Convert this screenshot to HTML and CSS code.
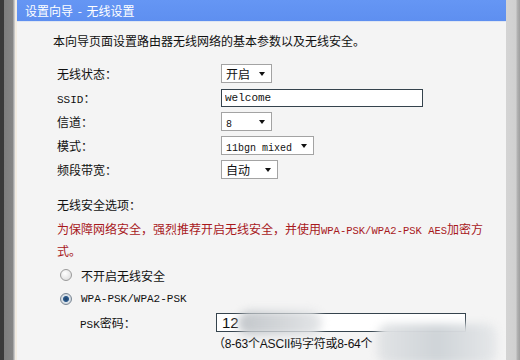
FILE: index.html
```html
<!DOCTYPE html>
<html lang="zh-CN">
  <head>
    <meta charset="UTF-8" />
    <title>设置向导 - 无线设置</title>
    <link rel="stylesheet" href="styles.css">
  </head>
  <body>
    <div class="edge"></div>
    <div class="window">
      <div class="title">设置向导 - 无线设置</div>
      <main class="content">
        <p class="intro">本向导页面设置路由器无线网络的基本参数以及无线安全。</p>
        <div class="form">
          <span class="label">无线状态：</span>
          <span class="select w-50"><select><option>开启</option></select></span>
          <span class="label"><span class="en">SSID</span>：</span>
          <span><input class="text ssid" type="text" value="welcome" /></span>
          <span class="label">信道：</span>
          <span class="select w-50"><select class="en"><option>8</option></select></span>
          <span class="label">模式：</span>
          <span class="select w-92"><select class="en"><option>11bgn mixed</option></select></span>
          <span class="label">频段带宽：</span>
          <span class="select w-56"><select><option>自动</option></select></span>
        </div>
        <p class="section">无线安全选项：</p>
        <p class="warn">为保障网络安全，强烈推荐开启无线安全，并使用<span class="en">WPA-PSK/WPA2-PSK AES</span>加密方<br />式。</p>
        <label class="radio"><input type="radio" name="sec" /> 不开启无线安全</label>
        <label class="radio"><input type="radio" name="sec" checked /> <span class="en">WPA-PSK/WPA2-PSK</span></label>
        <div class="psk">
          <span class="psk-label"><span class="en">PSK</span>密码：</span>
          <input class="text key" type="text" value="12" />
        </div>
        <p class="hint">（8-63个ASCII码字符或8-64个</p>
        <div class="blur blur-key"></div>
        <div class="blur blur-hint"></div>
      </main>
    </div>
    <div class="scroll"></div>
  </body>
</html>
```

FILE: styles.css
```css
body {
  margin: 0;
  height: 360px;
  display: flex;
  overflow: hidden;
  font-family: "Noto Sans CJK SC", sans-serif;
  font-size: 12px;
  color: #111;
  background: #f4f4f4;
}

.edge {
  width: 15px;
  background: linear-gradient(to right, #3a3a3a 0, #3a3a3a 4px, #7d7d7d 4px, #858585 13px, #c8c8c8 14px);
}

.window {
  flex: 1;
  border-left: 2px solid #f2ece2;
  display: flex;
  flex-direction: column;
}

.title {
  height: 22px;
  line-height: 21px;
  padding-left: 8px;
  color: #fff;
  font-size: 12px;
  word-spacing: 2px;
  background: linear-gradient(#6596f4, #5e8ff0);
  border-bottom: 1px solid #dfe6f2;
  box-sizing: border-box;
}

.content {
  position: relative;
  flex: 1;
  padding-left: 36px;
}

.en {
  font-family: "Liberation Mono", monospace;
  font-size: 11px;
}

p {
  margin: 0;
  line-height: 20px;
}

.intro {
  margin-top: 9px;
}

.form {
  display: grid;
  grid-template-columns: 164px auto;
  grid-auto-rows: 24px;
  align-items: center;
  margin: 10px 0 0 4px;
}

.select {
  position: relative;
  display: inline-block;
  height: 19px;
  border: 1px solid #a3a3a3;
  background: #fff;
  box-sizing: border-box;
}

.select select {
  appearance: none;
  border: 0;
  background: transparent;
  padding: 0 0 0 4px;
  height: 17px;
  width: 100%;
  font-family: "Noto Sans CJK SC", sans-serif;
  font-size: 12px;
  color: #111;
  outline: none;
}

.select select.en {
  font-family: "Liberation Mono", monospace;
  font-size: 10px;
}

.select::after {
  content: "";
  position: absolute;
  right: 6px;
  top: 7px;
  border-left: 3.5px solid transparent;
  border-right: 3.5px solid transparent;
  border-top: 4px solid #111;
}

.w-50 { width: 51px; }
.w-56 { width: 57px; }
.w-92 { width: 93px; }

.text {
  box-sizing: border-box;
  height: 18px;
  border: 1px solid #35434d;
  background: #fff;
  padding: 0 3px;
  outline: none;
}

.ssid {
  width: 202px;
  font-family: "Liberation Mono", monospace;
  font-size: 11px;
  color: #111;
}

.section {
  margin: 14px 0 0 4px;
}

.warn {
  margin: 4px 0 0 4px;
  color: #a8181c;
}

.warn .en {
  font-size: 10.5px;
}

.radio {
  display: flex;
  align-items: center;
  height: 24px;
  margin-left: 7px;
  gap: 9px;
}

.radio:first-of-type {
  margin-top: 2px;
}

.radio input {
  appearance: none;
  margin: 0;
  width: 12px;
  height: 12px;
  border-radius: 50%;
  border: 1px solid #9a9a9a;
  background: radial-gradient(circle at 40% 35%, #fff, #d6d6d6);
  box-sizing: border-box;
}

.radio input:checked {
  background: radial-gradient(circle, #1f3f66 0, #2b5a8c 2.5px, #dbe3ea 3.5px, #c9cfd6 6px);
  border-color: #7b8794;
}

.psk {
  display: flex;
  align-items: center;
  height: 22px;
  padding-left: 27px;
}

.psk-label {
  width: 136px;
}

.key {
  width: 250px;
  height: 19px;
  padding-left: 5px;
  font-family: "Liberation Sans", sans-serif;
  font-size: 15px;
  color: #111;
}

.hint {
  margin-left: 160px;
  line-height: 22px;
  font-family: "Liberation Sans", "Noto Sans CJK SC", sans-serif;
  font-size: 12px;
  letter-spacing: -0.2px;
}

.blur {
  position: absolute;
  filter: blur(4px);
  border-radius: 12px;
}

.blur-key {
  left: 221px;
  top: 289px;
  width: 84px;
  height: 24px;
  background: linear-gradient(to right, #c3c7cb, #d4d7da 55%, #e4e6e8);
}

.blur-hint {
  left: 360px;
  top: 302px;
  width: 120px;
  height: 40px;
  background: linear-gradient(to right, #e2e4e6, #cfd4d8 50%, #e6e8ea);
}

.scroll {
  width: 14px;
  background: linear-gradient(to right, #d4d4d4 0, #d0d0d0 10px, #b5b5b5 11px, #9e9e9e);
}
```
